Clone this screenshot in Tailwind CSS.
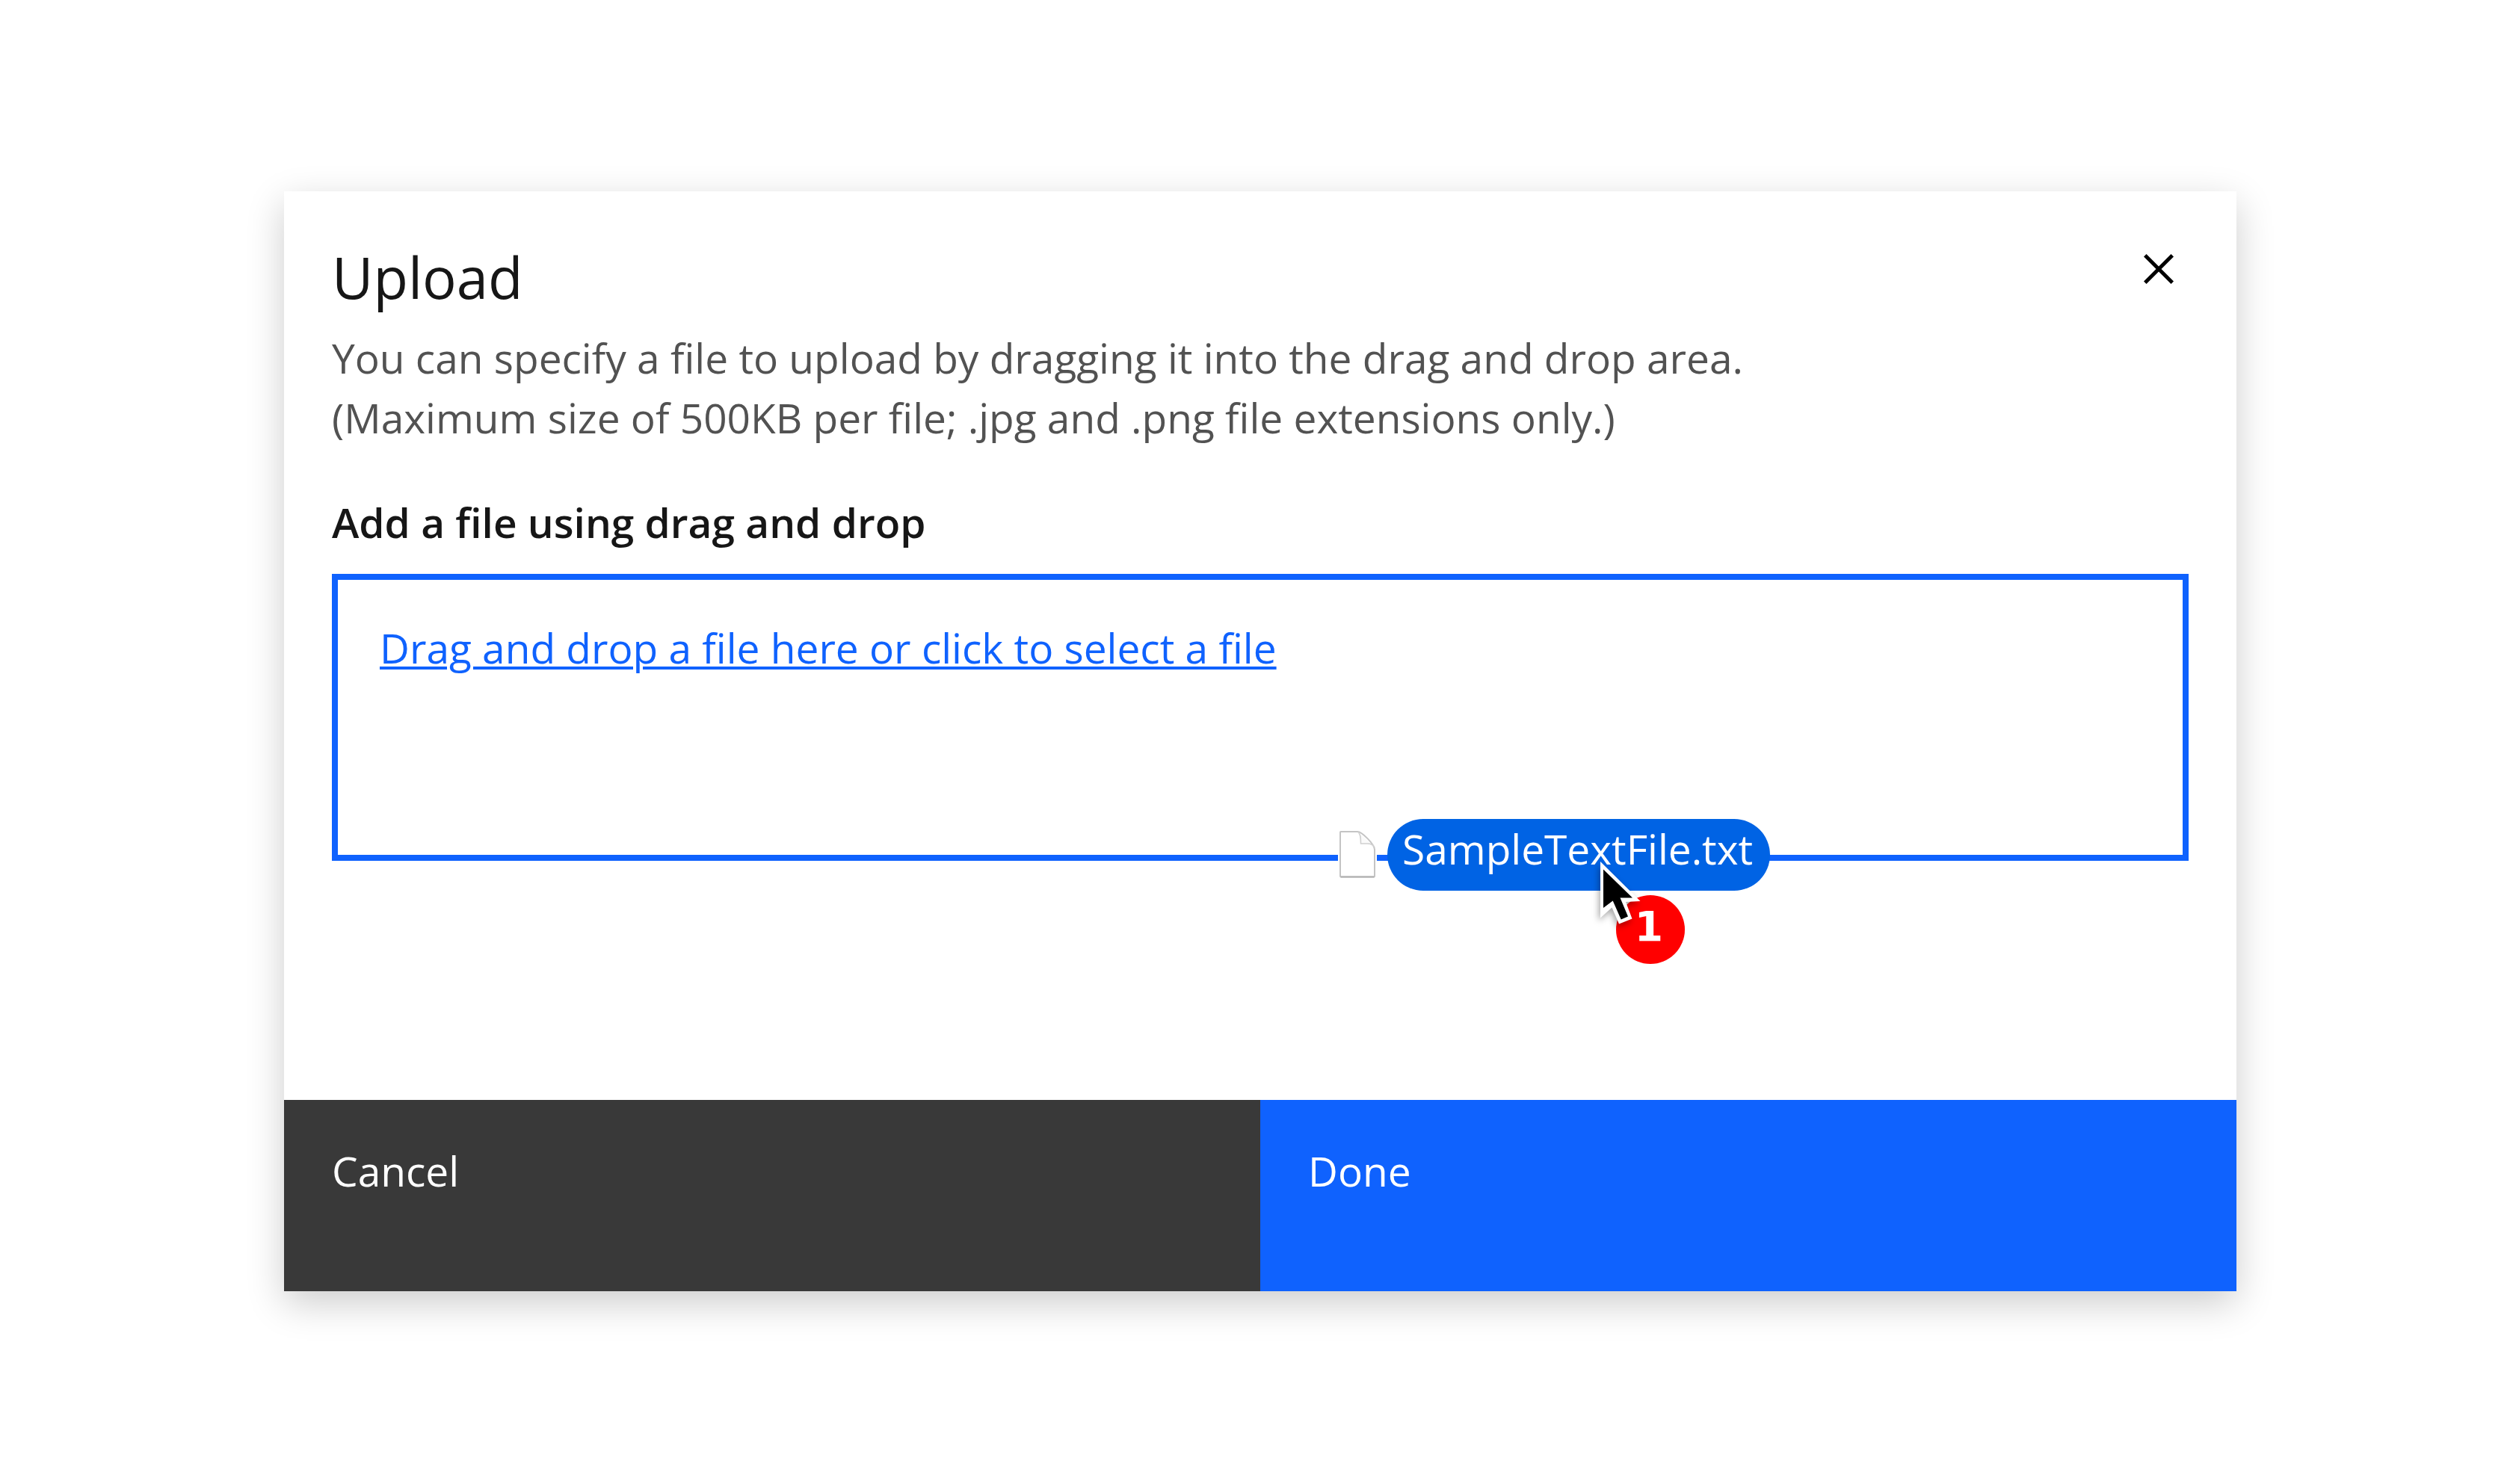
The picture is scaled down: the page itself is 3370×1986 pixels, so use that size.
<!DOCTYPE html>
<html lang="en">
<head>
<meta charset="utf-8">
<meta name="viewport" content="width=device-width, initial-scale=1">
<title>Upload</title>
<script src="https://cdn.jsdelivr.net/npm/@tailwindcss/browser@4"></script>
</head>
<body class="bg-white font-['Open_Sans',sans-serif] text-[55px] leading-[80px] text-[#161616]">
<main class="pt-64 pr-[378px] pb-64 pl-[380px]">
  <section role="dialog" aria-labelledby="title" class="bg-white shadow-[0_16px_48px_rgba(0,0,0,0.2)]">
    <header class="flex items-start justify-between px-16 pt-16">
      <div>
        <h1 id="title" class="text-[76px] leading-[102px]">Upload</h1>
        <p class="mt-[17px] text-[#525252]">You can specify a file to upload by dragging it into the drag and drop area.<br>(Maximum size of 500KB per file; .jpg and .png file extensions only.)</p>
      </div>
      <button type="button" aria-label="Close" class="size-20 shrink-0 text-black">
        <svg viewBox="0 0 32 32" class="size-20" fill="currentColor" aria-hidden="true"><path d="M24 9.4 22.6 8 16 14.6 9.4 8 8 9.4 14.6 16 8 22.6 9.4 24 16 17.4 22.6 24 24 22.6 17.4 16 24 9.4z"/></svg>
      </button>
    </header>

    <div class="px-16 pt-[60px] pb-80">
      <label for="file" class="block font-semibold">Add a file using drag and drop</label>
      <div class="relative mt-[29px] h-96 border-8 border-[#0f62fe] px-14 pt-[51px]">
        <input id="file" type="file" accept=".jpg,.png" class="sr-only">
        <a href="#file" class="text-[#0f62fe] underline decoration-4 underline-offset-4">Drag and drop a file here or click to select a file</a>

        <!-- File being dragged over the drop area -->
        <div class="absolute top-80 left-[1338px] flex items-center gap-[14px]">
          <svg viewBox="20 31 52 66" class="h-[66px] w-[52px] bg-white" aria-hidden="true">
            <path d="M23.5 33H46C52 33 69 50 69 57V92.500Q69 93.500 68 93.500H24Q23 93.500 23 92.500V34Q23 33 23.500 33Z" fill="#fff" stroke="#c4c4c4" stroke-width="2"/>
            <path d="M47 33.500C50 36 50.500 40 50.500 49H59C64 49 67 50 69 54" fill="#fafafa" stroke="#cfcfcf" stroke-width="1.500"/>
            <path d="M23.500 93.500H68.500" stroke="#b0b0b0" stroke-width="2"/>
          </svg>
          <span class="h-24 w-lg rounded-full bg-[#0063e4] pl-5 text-white">SampleTextFile.txt</span>
          <span class="absolute top-[102px] left-[372px] flex size-[92px] items-center justify-center rounded-full bg-[#ff0000] pr-1 pb-2 font-['DejaVu_Sans',sans-serif] font-bold text-white">1</span>
          <svg viewBox="20 10 80 120" class="absolute top-11 left-[340px] h-[120px] w-20 drop-shadow-[-2px_4px_4px_rgba(0,0,0,0.35)]" aria-hidden="true">
            <path d="M31 23 84.500 76 65 77 73.500 99.500 56 106.500 46.500 84.500 31 98.500Z" fill="#fff"/>
            <path d="M35 33.500 74 71.500 57.500 71.500 68 96.500 58.700 100.500 47.700 75.500 35 85Z" fill="#000"/>
          </svg>
        </div>
      </div>
    </div>

    <footer class="grid grid-cols-2 text-white">
      <button type="button" class="bg-[#393939] px-16 pt-[55px] pb-[121px] text-left">Cancel</button>
      <button type="button" class="bg-[#0f62fe] px-16 pt-[55px] pb-[121px] text-left">Done</button>
    </footer>
  </section>
</main>
</body>
</html>
